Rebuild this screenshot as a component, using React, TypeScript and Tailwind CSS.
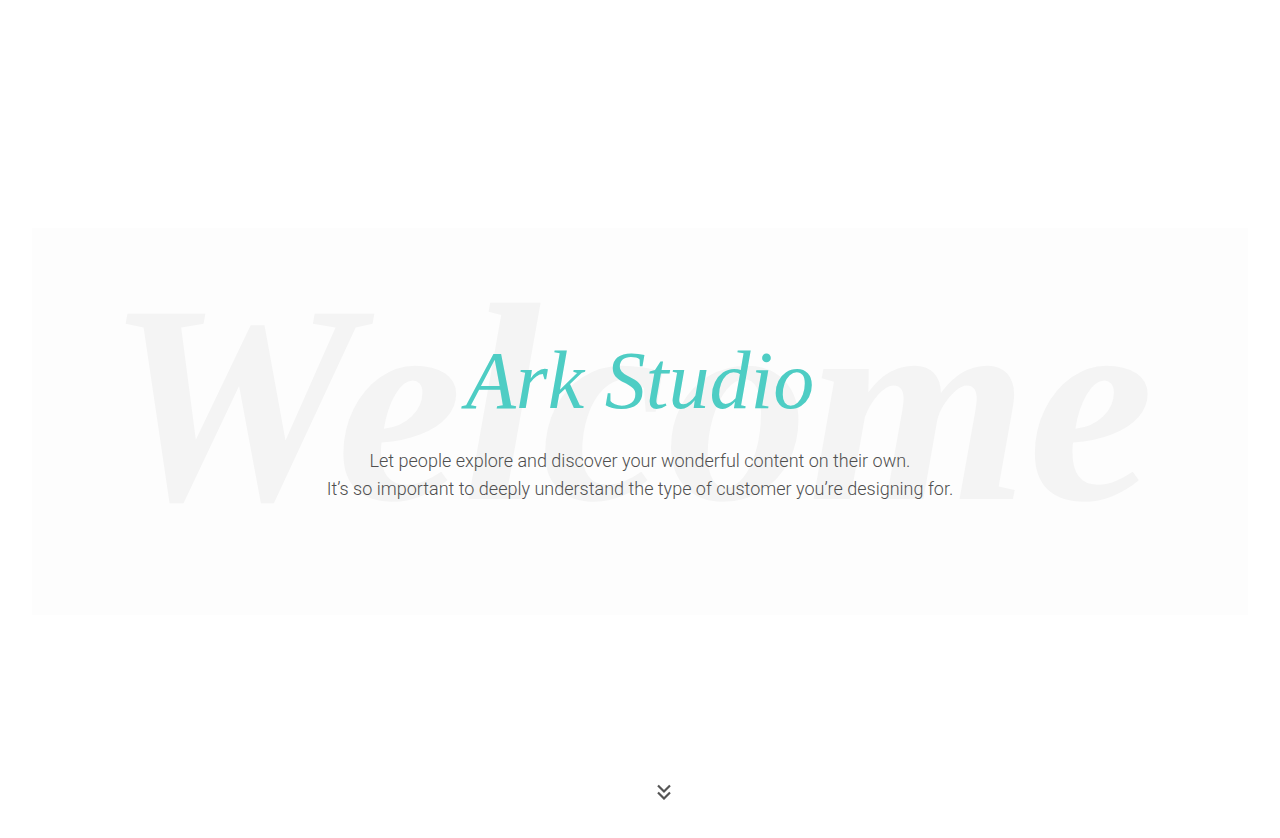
import React from "react";

const App = () => {
  return (
    <div className="relative h-[838px] w-full bg-white flex flex-col justify-center px-8 pt-[5px]">
      <section className="relative h-[387px] bg-[#fdfdfd] overflow-hidden flex flex-col items-center justify-center">
        <span
          className="absolute left-0 right-0 top-[34px] text-center text-[283px] leading-none font-bold italic text-[#f4f4f4] select-none pr-[20px]"
          style={{ fontFamily: '"Liberation Serif", serif' }}
        >
          Welcome
        </span>
        <div className="relative flex flex-col items-center">
          <h1
            className="text-[#4ecdc4] italic text-[82px] leading-none"
            style={{ fontFamily: '"Liberation Serif", serif' }}
          >
            Ark Studio
          </h1>
          <div
            className="mt-[25px] text-center text-[18px] leading-[28px] font-light text-[#4f4f4f]"
            style={{ fontFamily: "Roboto, sans-serif" }}
          >
            <p>Let people explore and discover your wonderful content on their own.</p>
            <p>It’s so important to deeply understand the type of customer you’re designing for.</p>
          </div>
        </div>
      </section>
      <div className="absolute left-0 right-0 bottom-[38px] flex justify-center pl-[48px]">
        <svg width="14" height="16" viewBox="0 0 14 16" fill="none" stroke="#555" strokeWidth="2.2">
          <path d="M1 1.5l6 6 6-6" />
          <path d="M1 8.5l6 6 6-6" />
        </svg>
      </div>
    </div>
  );
};

export default App;
